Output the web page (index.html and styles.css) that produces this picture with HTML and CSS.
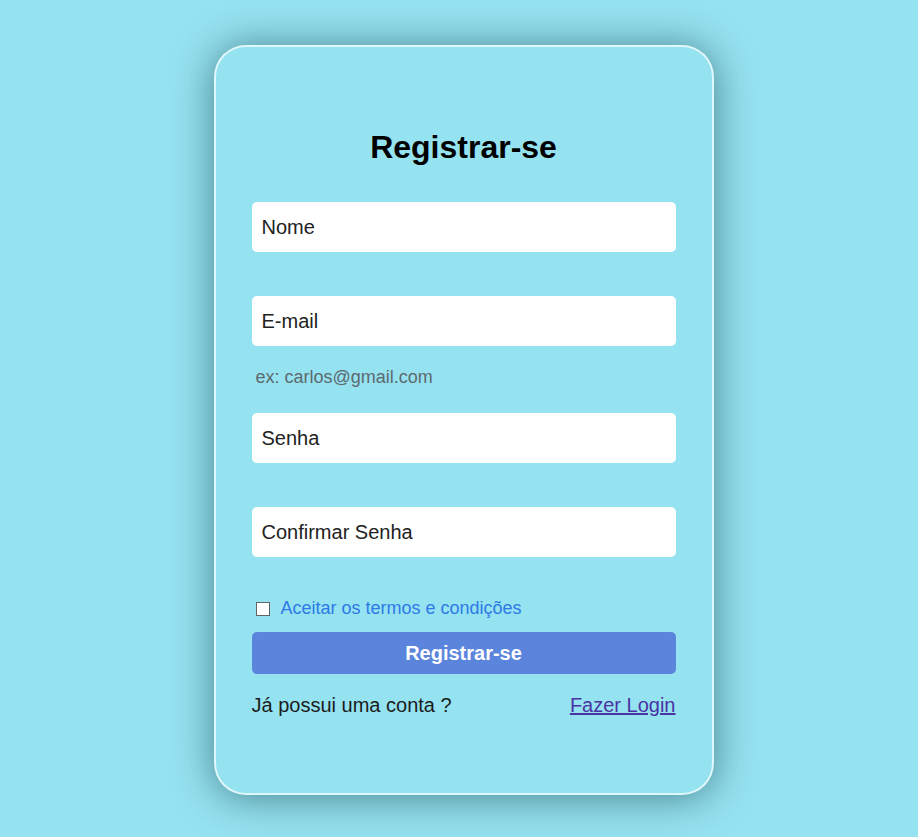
FILE: index.html
```html
<!DOCTYPE html>
<html lang="pt-BR">
<head>
<meta charset="utf-8">
<title>Registrar-se</title>
<link rel="stylesheet" href="styles.css">
</head>
<body>
<main class="page">
  <form class="card">
    <h1 class="title">Registrar-se</h1>
    <input class="field field-gap" type="text" placeholder="Nome">
    <input class="field" type="email" placeholder="E-mail">
    <p class="hint">ex: carlos@gmail.com</p>
    <input class="field field-gap" type="password" placeholder="Senha">
    <input class="field" type="password" placeholder="Confirmar Senha">
    <label class="terms"><input class="check" type="checkbox"><span>Aceitar os termos e condições</span></label>
    <button class="submit" type="button">Registrar-se</button>
    <div class="footer">
      <span>Já possui uma conta ?</span>
      <a class="login" href="#">Fazer Login</a>
    </div>
  </form>
</main>
</body>
</html>
```

FILE: styles.css
```css
html, body {
  margin: 0;
  padding: 0;
  background: #95e2f0;
  font-family: "Liberation Sans", Arial, sans-serif;
}
.page {
  height: 837px;
  display: flex;
  align-items: flex-start;
  justify-content: center;
  padding: 45px 0 0 9px;
  box-sizing: border-box;
}
.card {
  width: 500px;
  height: 750px;
  box-sizing: border-box;
  background: #95e2f0;
  border: 2px solid rgba(235, 250, 255, 0.85);
  border-radius: 32px;
  box-shadow: 0 2px 40px rgba(10, 50, 60, 0.55);
  padding: 82px 36px 0;
  display: flex;
  flex-direction: column;
}
.title {
  margin: 0 0 36px;
  font-size: 32px;
  line-height: 37px;
  font-weight: bold;
  text-align: center;
  color: #000;
}
.field {
  display: block;
  width: 100%;
  height: 50px;
  box-sizing: border-box;
  border: none;
  border-radius: 5px;
  background: #fff;
  padding: 0 10px;
  font-family: inherit;
  font-size: 20px;
  color: #222;
  outline: none;
}
.field::placeholder {
  color: #222;
  opacity: 1;
}
.field-gap {
  margin-bottom: 44px;
}
.hint {
  margin: 21px 0 25px 4px;
  font-size: 18px;
  line-height: 21px;
  color: #5d6a70;
}
.terms {
  margin-top: 41px;
  display: flex;
  align-items: center;
  height: 21px;
  font-size: 18px;
  color: #2d7ae6;
}
.check {
  appearance: none;
  -webkit-appearance: none;
  width: 14px;
  height: 14px;
  box-sizing: border-box;
  border: 1.5px solid #5f6466;
  background: #fff;
  border-radius: 0;
  margin: 0 11px 0 4px;
}
.submit {
  margin-top: 13px;
  height: 42px;
  border: none;
  border-radius: 5px;
  background: #5b85dd;
  color: #fff;
  font-family: inherit;
  font-size: 20px;
  font-weight: bold;
}
.footer {
  margin-top: 20px;
  display: flex;
  justify-content: space-between;
  font-size: 20px;
  line-height: 23px;
  color: #1c1c1c;
}
.login {
  color: #4a33a3;
  text-decoration: underline;
}
```
